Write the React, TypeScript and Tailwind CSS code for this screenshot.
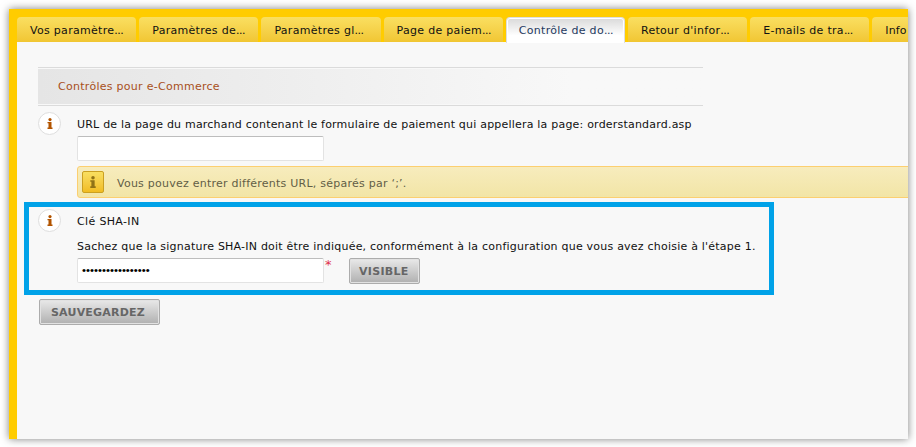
import React from "react";

const tabs = [
  { label: "Vos paramètre" },
  { label: "Paramètres de" },
  { label: "Paramètres gl" },
  { label: "Page de paiem" },
  { label: "Contrôle de do", active: true },
  { label: "Retour d'infor" },
  { label: "E-mails de tra" },
];

function Glyph({ className }: { className: string }) {
  return (
    <svg viewBox="0 0 6 11" className={className} fill="currentColor">
      <circle cx="3" cy="1.6" r="1.6" />
      <path d="M0.5 4H4.5V9.5H5.5V11H0.5V9.5H1.5V5.3H0.5Z" />
    </svg>
  );
}

function InfoCircle() {
  return (
    <div className="flex h-[23px] w-[23px] shrink-0 items-center justify-center rounded-full border border-[#dedede] bg-white text-[#b25400]">
      <Glyph className="h-[11px] w-[6px]" />
    </div>
  );
}

function Field({ children }: { children?: React.ReactNode }) {
  return (
    <div className="h-[25px] w-[247px] shrink-0 overflow-hidden rounded-[2px] border border-[#e3e3e3] border-t-[#bdbdbd] bg-white pl-1 leading-[23px]">
      {children}
    </div>
  );
}

function Button({ className, children }: { className: string; children: React.ReactNode }) {
  return (
    <button
      className={`block h-[26px] shrink-0 rounded-[2px] border border-[#acacac] bg-linear-to-b from-[#e9e9e9] to-[#b0b0b0] pt-px text-left font-bold leading-[24px] text-[#666] shadow-[inset_0_0_0_1px_#e2e2e2] ${className}`}
    >
      {children}
    </button>
  );
}

export default function App() {
  return (
    <div className="h-[447px] w-[916px] overflow-hidden bg-white pl-[9px] pt-[9px] font-['DejaVu_Sans',sans-serif] text-[11px] leading-4 text-[#111]">
      <div className="h-[430px] w-[899px] bg-[#f8f8f8] shadow-[0_0_8px_rgba(0,0,0,0.5)]">
        <div className="h-full overflow-hidden border-l-8 border-t-8 border-[#fc0]">
          <nav className="flex h-[25px] gap-[3px] bg-[#fc0] tracking-[0.3px]">
            {tabs.map((t) => (
              <div
                key={t.label}
                className={`w-[119.2px] shrink-0 whitespace-nowrap rounded-t-[4px] ${
                  t.active
                    ? "h-[26px] border border-b-0 border-[#dedede] bg-linear-to-b from-[#d9d9d9] to-white to-70% pl-3 pt-[5px] text-[#1f3a5f] shadow-[inset_0_0_0_1px_white]"
                    : "h-[25px] bg-linear-to-b from-[#fadf60] to-[#f1c632] pl-[13px] pt-[6px]"
                }`}
              >
                {t.label}
                <span className="tracking-[-0.5px]">...</span>
              </div>
            ))}
            <div className="h-[25px] grow whitespace-nowrap rounded-tl-[4px] bg-linear-to-b from-[#fadf60] to-[#f1c632] pl-[13px] pt-[6px] tracking-[0.1px]">
              Info
            </div>
          </nav>
          <div className="pl-[21px] pt-[25px]">
            <div className="h-[39px] w-[665px] border-y border-[#dbdbdb] py-px">
              <h2 className="h-[35px] bg-linear-to-r from-[#e5e5e5] to-[#f8f8f8] to-80% pl-5 pt-[10px] tracking-[0.28px] text-[#a8501c]">
                Contrôles pour e-Commerce
              </h2>
            </div>
            <div className="mt-[6px] flex gap-4">
              <InfoCircle />
              <div className="grow whitespace-nowrap pt-[5px]">
                <p className="h-[19px] tracking-[0.205px]">
                  URL de la page du marchand contenant le formulaire de paiement qui appellera la page: orderstandard.asp
                </p>
                <Field />
                <div className="mt-[5px] flex h-8 w-[840px] items-center rounded-[3px] border border-[#fccf70] bg-linear-to-b from-[#f7ecbd] to-[#f2e5a6] pl-1 text-[#625e46]">
                  <div className="flex h-[22px] w-[22px] items-center justify-center rounded-[2px] border border-[#cba021] bg-linear-to-b from-[#f9df60] to-[#f1bc20] text-[#907216]">
                    <Glyph className="h-[12px] w-[8px]" />
                  </div>
                  <span className="ml-[13px] pt-[3px] tracking-[0.24px]">Vous pouvez entrer différents URL, séparés par ‘;’.</span>
                </div>
              </div>
            </div>
            <div className="-ml-[14px] mt-1 flex h-[93px] w-[750px] gap-4 border-[5px] border-[#00a2e8] pl-[9px] pt-[2px]">
              <InfoCircle />
              <div className="whitespace-nowrap pt-[5px]">
                <p className="h-[25px] tracking-[0.35px]">Clé SHA-IN</p>
                <p className="h-[19px] tracking-[0.22px]">
                  Sachez que la signature SHA-IN doit être indiquée, conformément à la configuration que vous avez choisie à l'étape 1.
                </p>
                <div className="flex">
                  <Field>
                    <span className="font-['Liberation_Sans',sans-serif] text-[11.4px] text-black">•••••••••••••••••</span>
                  </Field>
                  <span className="w-[25px] pl-px text-[13px] leading-[14px] text-[#e0304c]">*</span>
                  <Button className="w-[71px] pl-[9px] tracking-[0.3px]">VISIBLE</Button>
                </div>
              </div>
            </div>
            <Button className="ml-px mt-1 w-[121px] pl-[11px] tracking-[0.2px]">SAUVEGARDEZ</Button>
          </div>
        </div>
      </div>
    </div>
  );
}
